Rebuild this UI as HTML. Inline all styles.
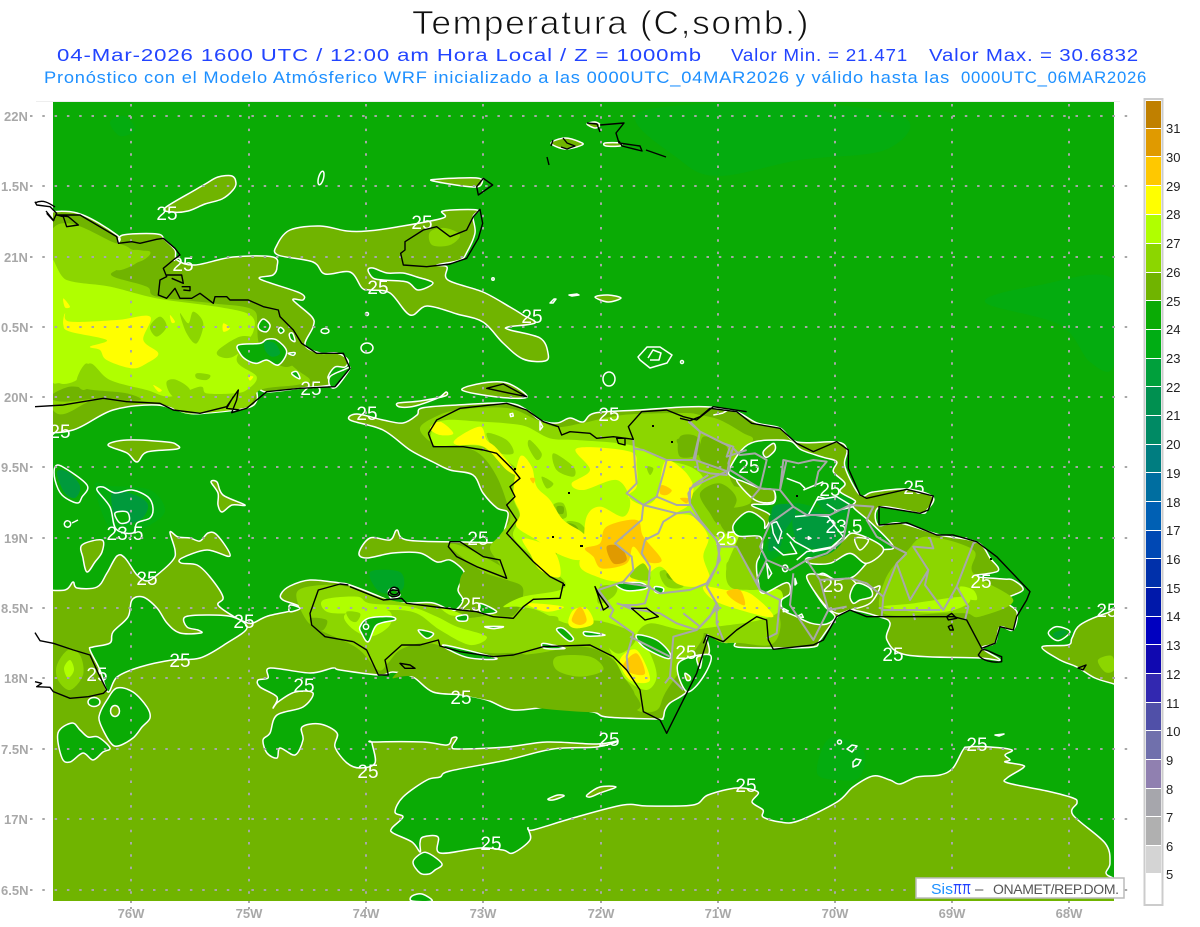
<!DOCTYPE html>
<html><head><meta charset="utf-8"><title>Temperatura</title>
<style>
html,body{margin:0;padding:0;background:#fff}
svg{display:block;font-family:"Liberation Sans",sans-serif}
svg *{vector-effect:non-scaling-stroke}
.o{fill:#70b400}.l6{fill:#8cd600}.l7{fill:#b0ff00}.l8{fill:#ffff00}.l9{fill:#ffc800}.l0{fill:#e09a00}
.g{fill:#0aab05;stroke:#fff;stroke-width:1.5;stroke-linejoin:round}
.ow{fill:#70b400;stroke:#fff;stroke-width:1.5;stroke-linejoin:round}
.w{fill:none;stroke:#fff;stroke-width:1.5;stroke-linejoin:round}
.k{fill:none;stroke:#000;stroke-width:1.4;stroke-linejoin:round}
.b{fill:none;stroke:#a8a8a8;stroke-width:2;stroke-linejoin:round}
.lab text{fill:#fff;font-size:19px;text-anchor:middle}
.ax text{fill:#a8a8a8;font-size:13px;font-weight:bold}
.cb text{fill:#222;font-size:13px}
</style></head><body>
<svg id="s" width="1200" height="927" viewBox="0 0 1200 927" xmlns="http://www.w3.org/2000/svg">
<defs><clipPath id="m"><rect x="53" y="102" width="1061" height="799"/></clipPath></defs>
<rect width="1200" height="927" fill="#fff"/>
<text x="412" y="34" font-size="33" fill="#111" stroke="#fff" stroke-width=".8" letter-spacing="1.5" textLength="398" lengthAdjust="spacingAndGlyphs">Temperatura (C,somb.)</text>
<g font-size="17.5" fill="#2244ff" letter-spacing=".7">
<text x="57" y="61" textLength="645" lengthAdjust="spacingAndGlyphs">04-Mar-2026 1600 UTC / 12:00 am Hora Local / Z = 1000mb</text>
<text x="731" y="61" textLength="177" lengthAdjust="spacingAndGlyphs">Valor Min. = 21.471</text>
<text x="929" y="61" textLength="210" lengthAdjust="spacingAndGlyphs">Valor Max. = 30.6832</text>
</g>
<g font-size="16.5" fill="#1e90ff" letter-spacing=".7">
<text x="44" y="83" textLength="906" lengthAdjust="spacingAndGlyphs">Pronóstico con el Modelo Atmósferico WRF inicializado a las 0000UTC_04MAR2026 y válido hasta las</text>
<text x="961" y="83" textLength="186" lengthAdjust="spacingAndGlyphs">0000UTC_06MAR2026</text>
</g>
<line x1="36" y1="101.5" x2="1120" y2="101.5" stroke="#eee"/>
<g clip-path="url(#m)">
<rect x="53" y="102" width="1061" height="799" fill="#0aab05"/>
<!-- subtle sea patches -->
<g fill="#04ac0f">
<polygon points="640,112 800,103 905,118 885,150 800,160 720,176 680,160"/>
<polygon points="985,302 1040,285 1114,280 1114,365 1090,362 1060,325"/>
<polygon points="830,738 863,750 860,777 840,780 817,773"/>
<polygon points="110,122 125,116 135,130 120,136"/>
</g>
<polygon fill="#00a525" points="370,572 400,572 402,590 380,592"/>
<!-- main olive -->
<polygon class="ow" points="40,590 65,590 73,582 77,588 97,587 107,573 117,556 125,558 137,575 147,581 157,575 173,560 175,550 170,532 178,537 190,538 200,541 208,533 217,535 230,556 207,550 182,558 181,563 197,565 210,577 223,597 218,605 233,616 245,622 253,623 268,616 300,608 283,600 281,594 290,586 310,580 340,583 350,585 383,598 390,602 410,603 433,603 450,610 457,609 463,600 458,590 463,577 463,570 450,560 437,562 420,553 393,553 367,558 359,553 370,538 390,540 397,530 407,540 463,542 507,542 504,533 508,513 497,508 483,493 473,475 450,470 433,462 410,450 383,430 350,420 357,414 383,420 403,423 417,415 422,408 457,405 507,403 527,410 540,420 557,423 570,418 583,422 595,413 640,410 683,407 710,407 737,412 757,423 780,428 797,442 837,442 847,450 845,467 860,495 873,492 907,489 933,497 927,510 920,513 880,507 878,525 900,523 940,535 977,542 990,558 998,571 972,576 1003,579 1013,580 1023,590 1005,600 1017,612 1013,630 1000,627 995,643 982,648 1000,660 980,658 907,655 887,640 890,623 880,617 850,610 837,617 820,640 813,647 773,648 737,647 735,642 723,642 707,635 708,655 680,662 683,673 690,687 683,695 670,703 665,710 663,718 657,719 607,717 593,712 553,707 513,710 487,700 463,695 433,692 413,677 393,672 380,675 340,670 333,668 310,673 270,668 268,678 258,680 260,687 277,697 273,708 278,702 295,692 313,693 303,707 277,715 270,733 263,740 267,753 277,758 280,748 295,755 303,740 302,727 320,724 337,733 335,747 347,763 360,768 375,763 372,743 373,742 423,742 447,745 452,738 457,738 452,747 460,749 507,747 547,742 597,744 618,741 597,747 553,749 507,760 450,771 440,777 427,780 403,797 395,812 403,817 392,828 393,833 412,842 420,852 420,843 423,837 438,837 440,853 480,848 503,850 513,853 530,840 528,828 533,830 573,818 623,805 647,806 693,805 708,795 737,788 758,792 752,802 763,810 763,817 780,822 798,821 837,802 853,787 873,776 890,780 900,784 917,777 940,775 953,768 963,750 968,747 990,747 1012,750 1005,755 1010,760 1005,762 1022,765 1023,768 1007,778 1008,783 1047,791 1073,798 1077,803 1073,815 1105,843 1110,863 1106,873 1113,878 1130,885 1130,920 40,920 30,900 30,620 30,592"/>
<!-- Cuba olive -->
<polygon class="ow" points="35,213 77,213 117,235 118,243 123,235 157,234 165,240 175,250 177,260 195,265 233,257 273,257 277,267 273,275 260,279 300,293 303,300 293,300 312,317 313,327 305,345 320,353 337,353 348,360 345,367 335,367 328,377 330,385 302,388 267,392 257,388 257,400 247,408 207,413 187,413 157,405 113,410 73,430 35,432 25,425 25,225 27,214"/>
<!-- north tongue -->
<polygon class="ow" points="277,245 290,230 320,226 347,231 367,231 397,227 443,218 443,211 477,210 473,217 475,233 467,252 460,260 437,265 447,267 448,280 483,292 510,307 523,315 535,323 508,327 510,330 540,338 548,353 545,361 523,359 503,343 483,322 457,314 427,306 410,315 390,293 370,290 362,288 350,272 325,274 313,262 278,255"/>
<polygon class="g" points="368,270 373,268 387,273 403,273 417,277 433,283 418,290 407,282 383,280 373,278"/>
<!-- small olive islets -->
<polygon class="ow" points="165,208 195,190 207,183 218,177 232,176 236,183 233,190 222,199 205,204 188,211 172,212"/>
<polygon class="ow" points="433,181 440,179 477,178 482,183 473,187"/>
<polygon class="ow" points="551,143 565,138 580,142 582,145 565,149"/>
<polygon class="ow" points="587,124 595,122 600,125 595,128"/>
<polygon class="ow" points="605,143 620,143 620,146 606,146"/>
<polygon class="ow" points="108,445 127,440 167,442 177,445 177,449 147,452 137,462 127,453"/>
<polygon class="ow" points="211,482 217,482 223,495 245,505 232,505 222,512 218,505 218,493"/>
<polygon class="ow" points="82,545 102,540 102,552 95,562 87,572 83,558"/>
<polygon class="ow" points="1130,610 1107,613 1080,625 1072,638 1068,645 1042,647 1060,660 1077,667 1095,678 1114,684 1130,690"/>
<polygon class="ow" points="462,390 483,383 507,383 527,397 497,397"/>
<polygon class="ow" points="398,403 420,401 445,396 446,392 438,398 415,406 400,407"/>
<polygon class="ow" points="595,297 608,295 621,298 608,302"/>
<g class="w">
<ellipse cx="321" cy="178" rx="2.5" ry="7" transform="rotate(15 321 178)"/>
<circle cx="367" cy="314" r="1.5"/>
<ellipse cx="325" cy="331" rx="4" ry="2.5"/>
<ellipse cx="367" cy="348" rx="6" ry="5"/>
<ellipse cx="609" cy="379" rx="6" ry="7"/>
<circle cx="493" cy="279" r="1.2"/>
<path d="M550,303l4-4 2 0-3 4Z M569,295l8-1 2 1-7 1Z"/>
<path d="M638,357 647,347 660,347 672,355 667,363 650,368 640,360Z"/>
<path d="M648,358 653,350 661,353 659,360 650,360"/>
<circle cx="682" cy="362" r="1.5"/>
</g>
<!-- Cuba shading (z6 coords) -->
<g transform="scale(.33333) translate(0,600)">
<polygon class="l6" points="150,100 350,130 400,150 450,155 430,180 350,210 340,230 440,260 470,290 640,310 760,330 780,400 880,500 930,540 890,555 780,570 740,620 600,640 540,635 480,610 300,595 150,610"/>
<polygon class="o" points="150,590 210,560 280,570 380,580 420,600 300,595 190,605"/>
<polygon class="o" points="780,345 830,345 900,440 950,470 970,500 920,480 850,500 780,440"/>
<polygon class="l7" points="150,190 200,240 330,260 470,295 650,320 750,345 760,395 710,480 770,530 740,570 700,580 620,580 600,560 510,590 440,570 330,540 270,490 230,540 180,550 150,510"/>
<g class="l6"><polygon points="450,380 480,350 500,380 470,410"/><polygon points="540,340 565,370 580,335 610,370 590,430 560,400"/><polygon points="500,545 530,540 570,570 540,600 510,580"/><polygon points="590,520 630,525 620,540 590,535"/><polygon points="790,510 815,500 830,530 810,550"/><polygon points="230,540 260,490 290,540 250,570"/><polygon points="655,450 720,410 760,420 700,470 660,470"/><polygon points="350,170 400,150 440,160 400,195 350,210"/></g>
<g class="l8"><polygon points="190,295 210,320 195,322"/><polygon points="195,340 210,365 350,360 450,350 430,420 475,460 440,490 395,505 320,480 300,450 270,440 320,420 210,395 190,375"/><polygon points="670,370 690,385 670,395"/><polygon points="510,345 525,365 515,368"/><polygon points="460,555 485,570 475,575"/><polygon points="745,530 760,530 750,542"/></g>
<g class="g"><polygon points="715,435 780,430 800,418 830,420 860,455 835,495 800,480 770,490 740,480 720,460"/><polygon points="775,375 790,357 810,375 800,395 780,390"/><polygon points="835,390 842,382 852,392 842,400"/><polygon points="868,402 878,400 885,424 872,418"/><polygon points="865,460 885,458 880,466"/><polygon points="875,520 890,515 900,535 890,533"/><polygon points="990,530 1030,510 1050,505 1010,560 990,558"/></g>
<polygon fill="#00a530" points="795,425 825,430 840,460 815,470 795,450"/>
</g>
<!-- Hispaniola -->
<polygon class="l6" points="297,592 323,585 353,588 390,600 447,610 463,618 495,613 505,600 512,590 500,565 490,548 500,535 510,520 507,503 497,477 483,457 467,448 443,447 428,440 420,428 433,418 457,410 507,408 537,420 557,427 583,423 623,415 683,413 700,415 720,420 743,433 753,440 737,457 730,477 737,493 730,513 720,523 737,547 757,580 777,610 780,630 770,645 740,643 720,642 705,633 700,643 667,690 657,710 637,710 633,690 610,667 567,660 550,653 537,657 517,653 490,653 450,647 423,643 400,650 388,663 378,670 357,648 320,630 305,618"/>
<g transform="translate(350,390) scale(.33333)">
<polygon class="o" points="980,150 1010,145 1040,165 1000,178"/>
<polygon class="o" points="1050,170 1130,180 1130,240 1060,220"/>
<polygon class="l6" points="300,470 340,470 470,540 470,570 390,540"/>
<polygon class="o" points="345,545 470,570 520,600 480,680 345,630"/>
<polygon class="o" points="130,860 270,770 430,800 560,790 700,770 790,810 830,880 860,960 620,960 340,915 190,860"/>
<polygon class="l6" points="620,800 720,800 760,840 690,860 620,840"/>
<polygon class="l7" points="250,110 290,90 390,95 470,100 530,110 600,145 680,150 840,165 930,205 1020,230 1060,270 1020,330 1060,400 1100,440 1170,420 1130,530 1140,590 1200,600 1290,600 1290,660 1230,690 1100,710 1000,720 900,700 860,740 900,790 920,860 890,900 830,870 800,820 730,700 650,700 560,660 500,650 460,650 520,620 630,600 640,570 550,500 490,440 510,380 490,320 510,250 450,200 400,170 330,165 250,165"/>
<g class="l6"><polygon points="410,130 470,150 490,190 440,185"/><polygon points="540,150 575,190 560,210 535,170"/><polygon points="610,190 670,230 670,260 620,240"/><polygon points="610,345 640,340 650,380 620,385"/><polygon points="650,395 690,400 710,430 665,425"/><polygon points="580,460 620,490 600,500 565,470"/><polygon points="930,545 980,545 1000,590 950,590"/><polygon points="1000,400 1040,405 1030,445 1005,440"/><polygon points="1060,370 1100,335 1110,350 1070,395"/><polygon points="575,260 610,280 590,295"/><polygon points="1130,520 1165,510 1170,560 1140,570"/><polygon points="1120,290 1190,300 1200,340 1130,350"/><polygon points="750,590 800,590 790,620 745,640"/><polygon points="570,680 620,680 620,700 580,705"/><polygon points="720,700 780,700 860,740 800,790"/></g>
<g class="o"><polygon points="655,400 675,405 685,420 665,420"/><polygon points="620,350 640,350 640,370 625,370"/><polygon points="950,550 975,555 975,570 955,565"/></g>
<g class="l8"><polygon points="240,115 270,95 310,130 270,135"/><polygon points="320,145 390,110 410,150 440,175 500,250 470,240 400,170 320,165"/><polygon points="510,200 545,230 560,290 600,330 640,390 700,430 720,470 690,510 620,490 560,450 500,410 510,370 490,310"/><polygon points="520,445 610,480 630,560 570,540 540,490"/><polygon points="680,175 840,185 860,230 860,290 835,320 880,345 920,320 945,215 1000,240 1030,290 1015,345 980,370 1030,380 1075,440 1060,500 1080,570 1040,590 980,580 930,530 870,570 800,575 740,560 690,530 700,470 710,380 750,350 820,380 840,330 800,270 700,300 665,280 720,240"/><polygon points="1060,590 1130,600 1200,610 1270,680 1170,660 1090,630"/><polygon points="530,640 640,650 590,665"/><polygon points="670,660 710,655 730,700 680,715 655,700"/><polygon points="810,810 860,780 900,870 840,870"/><polygon points="745,365 790,410 750,420"/></g>
<g class="l6"><polygon points="890,230 910,235 900,255"/><polygon points="840,560 880,520 900,570"/></g>
<g class="l9"><polygon points="705,475 750,460 770,410 860,390 880,440 935,510 890,515 850,470 830,520 755,535 730,500"/><polygon points="935,285 965,300 950,315 930,310"/><polygon points="990,325 1015,325 1010,340"/><polygon points="1130,605 1170,600 1185,645 1150,630"/><polygon points="665,690 690,650 710,690 690,705"/><polygon points="820,825 860,790 885,850 845,850"/><polygon points="540,265 555,265 550,280"/></g>
<polygon class="l0" points="770,470 810,470 830,510 790,520"/>
<g class="g"><polygon points="860,735 920,750 960,790 950,805 880,770"/><polygon points="800,582 870,578 890,595 830,602"/><polygon points="915,590 940,595 935,610 915,605"/><polygon points="985,820 1080,795 1060,860 1010,905"/></g>
<polygon fill="#8cd600" stroke="#fff" stroke-width="1.5" points="1040,805 1055,800 1050,835"/><polygon fill="#8cd600" stroke="#fff" stroke-width="1.5" points="1005,850 1020,860 1020,870 1010,870"/>
<g class="w"><path d="M480,72l8-2 2 8-8 2ZM525,85l4 3M570,95l8 15-8 10ZM1090,75l30-6 M1120,55l15 5-15 8"/></g>
</g>
<!-- peninsula (z12 coords) -->
<g transform="translate(290,570) scale(.33333)">
<polygon class="l7" points="100,90 200,80 240,100 360,110 440,140 500,170 590,200 540,225 450,180 380,130 300,120 180,130 110,125"/>
<polygon class="l7" points="170,130 290,120 300,165 240,200 180,170"/>
<polygon class="l7" points="450,110 520,135 480,135"/>
<polygon class="l6" points="170,125 210,130 200,155 180,150"/>
<polygon class="o" points="60,145 110,150 100,180 75,175"/>
<g class="g"><polygon points="210,170 235,145 300,140 315,150 260,165 235,215 215,190"/><polygon points="385,180 430,190 410,205"/><polygon points="500,140 530,135 530,152 505,152"/><polygon points="570,100 620,125 575,130"/><polygon points="800,180 820,175 850,205 835,212"/><polygon points="885,185 945,195 890,198"/><polygon points="585,170 640,170 610,176"/><polygon points="760,220 825,235 765,235"/><polygon points="460,225 620,265 530,262"/><polygon points="295,65 310,55 330,75 305,85"/><polygon points="0,105 30,115 0,125"/></g>
<circle cx="228" cy="170" r="8" class="w"/>
</g>
<!-- DR shading & hole (z5 coords) -->
<g transform="translate(680,400) scale(.33333)">
<polygon class="o" points="0,110 50,110 60,160 0,170"/>
<polygon class="o" points="70,110 140,140 130,200 70,170"/>
<polygon class="o" points="60,280 120,250 170,300 120,370 90,340"/>
<polygon class="l6" points="610,640 615,540 680,455 740,410 880,450 880,520 1000,600 900,650 860,640 780,640"/>
<polygon class="l7" points="610,620 700,610 850,590 865,610 800,635 700,635"/>
<polygon class="l7" points="840,560 880,570 890,600 850,590"/>
<polygon class="g" points="150,205 185,150 225,125 290,120 335,125 365,150 430,172 470,185 460,215 495,250 480,275 525,302 520,322 575,370 640,440 600,452 560,490 520,530 470,540 430,520 405,530 380,530 410,585 435,620 465,650 440,672 395,670 350,650 310,630 305,600 330,580 320,548 250,580 235,545 230,490 245,455 240,410 175,408 160,375 205,335 250,360 255,385 270,345 215,315 280,310 280,270 235,265 155,230"/>
<g fill="#70b400" stroke="#fff" stroke-width="1.5"><polygon points="250,155 280,130 285,150 260,172"/><polygon points="170,240 240,265 280,270 280,305 225,300"/><polygon points="380,475 440,460 490,420 525,400 610,445 560,490 510,460 450,490 390,490"/><polygon points="525,415 565,420 540,450"/><polygon points="380,530 430,525 470,540 510,535 540,560 575,565 600,560 570,610 510,630 470,640 430,610"/></g>
<polygon class="g" points="510,585 530,550 570,565 575,590 540,600 520,610"/>
<polygon class="g" points="1105,700 1130,680 1170,695 1135,722"/>
<polygon fill="#00a030" points="1120,700 1150,690 1160,700 1130,715"/>
<g fill="#00a81c"><polygon points="270,345 340,310 420,320 490,290 510,320 490,420 440,465 380,470 340,450 270,480 240,470 270,400"/></g>
<polygon fill="#009a3c" points="345,345 445,345 470,400 445,440 400,445 350,420"/>
<polygon fill="#009a3c" points="280,320 340,315 345,345 310,400 300,440 265,450 275,380"/>
<polygon fill="#00a030" points="410,300 480,290 500,330 450,340"/>
<g class="w"><path d="M345,350l55,-5 45,5 25,35 20,25-40,35-50,10-55,-30-25,-25M275,370l15-5 15,30-10,35-15-30ZM330,425l20 35-40,5-30-25M350,480l30-25 80-15 30-20M315,495a8 10 0 1 0 1 0ZM350,390l15-5M385,410l8 5-8 3ZM345,535l5 15-5 5ZM310,625l15 8-15 2ZM350,650l15-8 5 10ZM260,490l15 30-10 15ZM385,345l30-55 20 5M320,235l40 15 15 15M430,245l-60,25M410,300l60-10 50,30-50,12-30-20"/></g>
</g>
<!-- dark west blobs -->
<g class="g"><polygon points="55,467 63,467 87,485 82,497 77,503 62,495 55,480"/></g>
<polygon fill="#009a3c" points="57,472 68,472 80,486 75,498 64,492"/>
<polygon fill="#04ac0f" points="95,485 110,486 150,490 165,510 150,525 120,535 105,520"/>
<polygon fill="#009a3c" points="112,492 135,495 148,505 140,520 118,522"/>
<polygon class="w" points="97,490 103,487 115,493 132,490 148,497 153,508 150,518 137,523 133,533 116,529 110,507"/>
<polygon class="g" points="115,513 127,512 129,521 120,523"/>
<path class="w" d="M65,526a3 3 0 1 0 5-4a3 3 0 1 0-5 4ZM72,523l4-2 2-1"/>
<!-- south holes -->
<g class="g">
<polygon points="90,650 93,647 110,643 113,632 128,617 132,600 143,597 157,608 167,623 180,633 201,633 198,630 187,627 185,617 207,615 233,617 247,628 227,643 200,658 172,660 140,667 117,677 108,692 100,670"/>
<ellipse cx="94" cy="702" rx="6" ry="4.5"/>
<polygon points="100,713 107,700 117,688 133,692 147,707 150,718 142,727 133,738 118,746 110,742 100,723"/>
<polygon points="58,733 72,723 80,730 88,737 98,737 110,748 103,752 93,760 83,753 70,762 62,758"/>
<polygon points="413,862 422,853 430,854 442,864 435,870 429,874 420,873"/>
<polygon points="412,901 412,896 422,894 432,901"/>
</g>
<ellipse class="ow" cx="115" cy="711" rx="4.5" ry="5.5"/>
<polygon class="ow" points="548,799 558,795 564,796 553,800"/>
<polygon class="ow" points="587,795 600,787 616,787 600,793 590,797"/>
<polygon fill="#8cd600" points="57,665 68,650 80,655 83,675 70,690 58,680"/>
<polygon fill="#b0ff00" points="64,668 70,660 74,670 68,678"/>
<polygon fill="#8cd600" points="430,232 445,228 460,235 450,245 432,245"/>
<polygon fill="#8cd600" points="1098,660 1112,656 1114,670 1105,672"/>
<!-- z10 rings -->
<g class="w"><circle cx="839.5" cy="742" r="2"/><path d="M847,749l5-4 5,1-5,6ZM853,762l3-3 5,1-3 5-5 2Z"/><path d="M995,735l9-1-5,2Z" fill="#fff"/></g>
<!-- grid -->
<g fill="none" stroke="#a8a8a8" stroke-width="2" stroke-dasharray="2.5 9.8">
<path d="M131,104V901M249,104V901M366,104V901M483,104V901M601,104V901M718,104V901M835,104V901M952,104V901M1069,104V901"/>
</g>
<!-- labels -->
<g class="lab">
<text x="167" y="220">25</text><text x="183" y="271">25</text><text x="378" y="294">25</text><text x="422" y="229">25</text><text x="532" y="323">25</text><text x="311" y="395">25</text><text x="60" y="438">25</text><text x="367" y="420">25</text><text x="609" y="421">25</text><text x="749" y="473">25</text><text x="830" y="496">25</text><text x="914" y="494">25</text><text x="844" y="533" font-size="18">23.5</text><text x="726" y="545">25</text><text x="125" y="540" font-size="18">23.5</text><text x="147" y="585">25</text><text x="97" y="681">25</text><text x="244" y="628">25</text><text x="180" y="667">25</text><text x="304" y="692">25</text><text x="368" y="778">25</text><text x="461" y="704">25</text><text x="471" y="611">25</text><text x="478" y="545">25</text><text x="686" y="659">25</text><text x="833" y="592">25</text><text x="981" y="588">25</text><text x="893" y="661">25</text><text x="1107" y="617">25</text><text x="609" y="746">25</text><text x="977" y="751">25</text><text x="746" y="792">25</text><text x="491" y="850">25</text>
</g>
</g>
<!-- horizontal grid extends outside map -->
<g fill="none" stroke="#a8a8a8" stroke-width="2" stroke-dasharray="2.5 9.8">
<path d="M30,116H1135M30,186H1135M30,257H1135M30,327H1135M30,397H1135M30,467H1135M30,538H1135M30,608H1135M30,678H1135M30,749H1135M30,819H1135M30,890H1135"/>
<path d="M131,901V910M249,901V910M366,901V910M483,901V910M601,901V910M718,901V910M835,901V910M952,901V910M1069,901V910" stroke-dasharray="2 4"/>
</g>
<!-- borders -->
<g transform="translate(350,390) scale(.33333)"><path class="b" d="M850,148 855,230 860,280 830,310 880,345 875,390 795,460 845,500 850,540 820,575 760,595 745,600 790,660 780,680 850,730 830,800 835,845M850,175 880,180 950,210 1030,210 1050,125 1015,90M1050,125 1140,170 1130,200 1190,180M1040,210 1045,240 1080,250 1130,255 1145,180M950,210 940,250 920,320 880,345M920,320 980,345 1020,345 1015,310 1030,285 1075,255M980,370 1020,365 1060,405 1100,450 1110,510 1070,580 1020,600 930,610 895,590 900,530 875,490 885,450 925,430 940,395 980,370M820,578 900,590 885,640 860,645 815,645 850,660M1070,590 1100,640 1080,680 1040,720 970,740 960,860 1000,900M800,640 870,660 930,670 980,700 1040,720M840,740 960,800M1100,650 1100,700 1120,750M960,860 945,880M880,345 980,370"/></g>
<g transform="translate(680,400) scale(.33333)"><path class="b" d="M25,65 60,95 130,130 160,140 145,190 150,210 115,225 80,240 30,265 30,310 60,360 105,415 120,440 110,500 80,560 115,620 60,680 10,640M60,95 45,180 145,215M160,145 180,165 225,160 260,180 240,265M150,210 240,265 300,270 310,180 355,190 400,180 440,185 415,215 405,260M300,270 340,320 380,345 450,345 510,315 580,320 560,360 590,410 640,440 680,460M340,320 270,370 240,440 260,480 230,540 240,570 170,440 115,440M260,480 330,510 380,480 440,460 490,420 510,315M380,480 420,540 445,630 400,720 330,615 340,520M680,460 650,490 610,590 605,650M650,490 690,600 745,510 700,440 760,445 750,415M610,590 560,550 510,535 420,540M745,510 735,555 790,630 830,560 880,430 890,425M830,560 865,620 855,660M605,630 780,630M500,620 445,630M240,570 300,600 290,700 260,715M215,295 240,265M300,270 320,180M700,640 705,660"/></g>
<!-- coasts -->
<g transform="translate(350,390) scale(.33333)">
<path class="k" d="M235,130 260,90 330,55 470,40 530,60 580,95 625,110 635,135 660,125 720,130 740,145 790,140 850,148 835,110 875,65 950,60 1000,80 1040,90 1090,50 1190,65"/>
<path class="k" d="M235,130 250,170 340,170 400,180 440,190 490,240 510,265 480,290 495,320 470,345 500,390 470,430 550,515 600,560 640,580 630,625 550,628 520,650 490,685 430,680 380,665 330,660 170,640 155,625 100,630 0,590"/>
<path class="k" d="M1075,740 1040,850 1000,930 950,1030 930,990 880,965 870,900 830,840 790,800 720,765 580,770 490,795 430,800 330,785 270,768 265,750 210,765 155,765 105,810 115,855 85,855 50,780 10,755"/>
<path class="k" d="M300,455 330,455 400,500 450,510 470,565 380,530 320,500 295,470Z"/>
<path class="k" d="M735,590 760,660 775,650 745,610ZM150,820 180,825 195,835 165,835Z"/>
<path class="k" d="M120,600a12 10 0 1 0 26 6a12 10 0 1 0-26-6ZM800,145l25 0 0 20-20-5ZM845,655 890,655 925,680 885,690Z"/>
</g>
<g transform="translate(290,570) scale(.33333)">
<path class="k" d="M190,215 105,200 65,165 60,130 85,60 150,42 175,45"/>
<path class="k" d="M295,70a17 10 0 1 0 34 0a17 10 0 1 0-34 0Z"/>
</g>
<g transform="translate(680,400) scale(.33333)">
<path class="k" stroke="#222" d="M0,55 30,62 60,50 90,25 170,35 215,70 300,85 350,130 400,155 470,125 505,150 505,205 540,285 560,295 680,268 760,288 745,330 720,340 597,320 597,375 660,370 680,368 770,405 820,405 890,425 950,470 1050,575 1040,600 1010,650 1000,690 960,680 945,730 905,745 860,660 820,650 720,650 600,650 560,650 510,630 470,650 430,720 400,735 280,748 265,720 260,660 230,650 170,690 130,725 80,705 70,730"/>
<path class="k" d="M905,750c15,-5 40,15 60,20v15c-30,5-60,-5-70,-20ZM805,680l10,-5 5,15-10,0ZM800,650l15-10 15,15-25,5Z"/>
</g>
<g transform="scale(.33333) translate(0,600)">
<path class="k" d="M105,5 110,15 150,20 170,40 160,62 140,40M170,45 190,50 200,80 235,75 205,50 170,45 240,45 350,110 355,130 395,125 420,130 470,118 490,115 525,145 540,165 520,180 490,205 500,230 480,240 475,285 500,295 525,265 540,295 575,295 600,280 640,310 645,290 680,290 690,300 745,300 790,320 835,330 840,350 880,390 905,430 950,460 1030,460 1050,505 1005,560 900,565 800,575 770,600 740,625 695,638 710,600 715,570 680,620 600,640 520,630 480,610 380,605 310,595 190,615 105,620M500,225 545,225 550,250 515,235M545,260 570,260 570,272 550,270M700,590 680,625 718,630"/>
</g>
<g transform="translate(270,170) scale(.33333)">
<path class="k" d="M405,215 460,180 500,170 540,200 590,180 610,140 630,118 638,160 625,205 590,265 540,282 470,290 400,285 392,250 405,240ZM620,50 640,25 668,45 625,75ZM650,655 700,642 770,680 720,670Z"/>
</g>
<g transform="scale(.33333) translate(0,1440)"><path class="k" d="M105,458 120,482 160,490 220,510 270,525 295,580 320,630 310,640 265,650 210,655 160,635 150,622 110,620 125,610 105,605"/></g>
<path class="k" d="M35,203c8-4 14 0 20 4M46,211l8 10M563,138l4 5 8 3-8 3-6-2M547,157l2 8M587,123l10 1 3 8M600,125l24-2-8 10 3 10 21 3 2 5-20-5-3-5M646,150l20 7M553,140l-2 6M1086,665l-8 3 5 2Z"/>
<g fill="#000"><rect x="652" y="425" width="2" height="2"/><rect x="671" y="441" width="2" height="2"/><rect x="514" y="468" width="2" height="2"/><rect x="568" y="492" width="2" height="2"/><rect x="552" y="536" width="2" height="2"/><rect x="580" y="545" width="3" height="2"/><rect x="563" y="584" width="2" height="2"/><rect x="796" y="495" width="2" height="2"/><rect x="990" y="558" width="2" height="2"/></g>
<!-- axis labels -->
<g class="ax">
<text x="4" y="121">22N</text><text x="1" y="191">1.5N</text><text x="4" y="262">21N</text><text x="1" y="332">0.5N</text><text x="4" y="402">20N</text><text x="1" y="472">9.5N</text><text x="4" y="543">19N</text><text x="1" y="613">8.5N</text><text x="4" y="683">18N</text><text x="1" y="754">7.5N</text><text x="4" y="824">17N</text><text x="1" y="895">6.5N</text>
<g text-anchor="middle"><text x="131" y="918">76W</text><text x="249" y="918">75W</text><text x="366" y="918">74W</text><text x="483" y="918">73W</text><text x="601" y="918">72W</text><text x="718" y="918">71W</text><text x="835" y="918">70W</text><text x="952" y="918">69W</text><text x="1069" y="918">68W</text></g>
</g>
<!-- credit -->
<rect x="916" y="878" width="208" height="20" fill="#fff" stroke="#bbb" stroke-width="1.5"/>
<text x="931" y="894" font-size="15" fill="#1e90ff" textLength="22" lengthAdjust="spacingAndGlyphs">Sis</text>
<text x="953" y="894" font-size="18" fill="#2040ff" textLength="18" lengthAdjust="spacingAndGlyphs">ππ</text>
<text x="975" y="894" font-size="15" fill="#555">–</text>
<text x="993" y="894" font-size="14" fill="#555" textLength="126" lengthAdjust="spacing">ONAMET/REP.DOM.</text>
<!-- colorbar -->
<rect x="1144.5" y="99" width="18" height="806" fill="#fff" stroke="#ccc" stroke-width="2"/>
<g>
<rect x="1146" y="101" width="15" height="27" fill="#c08000"/><rect x="1146" y="129" width="15" height="27" fill="#e09a00"/><rect x="1146" y="157" width="15" height="28" fill="#ffc800"/><rect x="1146" y="186" width="15" height="28" fill="#ffff00"/><rect x="1146" y="215" width="15" height="28" fill="#b0ff00"/><rect x="1146" y="244" width="15" height="28" fill="#8cd600"/><rect x="1146" y="273" width="15" height="27" fill="#70b400"/><rect x="1146" y="301" width="15" height="28" fill="#0aab05"/><rect x="1146" y="330" width="15" height="28" fill="#00ad14"/><rect x="1146" y="359" width="15" height="27" fill="#00a03c"/><rect x="1146" y="387" width="15" height="28" fill="#009050"/><rect x="1146" y="416" width="15" height="28" fill="#008a64"/><rect x="1146" y="445" width="15" height="27" fill="#007d80"/><rect x="1146" y="473" width="15" height="28" fill="#006ea0"/><rect x="1146" y="502" width="15" height="28" fill="#0060b4"/><rect x="1146" y="531" width="15" height="27" fill="#0048b4"/><rect x="1146" y="559" width="15" height="28" fill="#0030aa"/><rect x="1146" y="588" width="15" height="28" fill="#0018aa"/><rect x="1146" y="617" width="15" height="27" fill="#0000c0"/><rect x="1146" y="645" width="15" height="28" fill="#1008b0"/><rect x="1146" y="674" width="15" height="28" fill="#3228b0"/><rect x="1146" y="703" width="15" height="27" fill="#5050a8"/><rect x="1146" y="731" width="15" height="28" fill="#7070ac"/><rect x="1146" y="760" width="15" height="28" fill="#9080b0"/><rect x="1146" y="789" width="15" height="27" fill="#a6a6ac"/><rect x="1146" y="817" width="15" height="28" fill="#b0b0b0"/><rect x="1146" y="846" width="15" height="27" fill="#d4d4d4"/>
</g>
<g class="cb">
<text x="1166" y="133">31</text><text x="1166" y="162">30</text><text x="1166" y="191">29</text><text x="1166" y="219">28</text><text x="1166" y="248">27</text><text x="1166" y="277">26</text><text x="1166" y="306">25</text><text x="1166" y="334">24</text><text x="1166" y="363">23</text><text x="1166" y="392">22</text><text x="1166" y="420">21</text><text x="1166" y="449">20</text><text x="1166" y="478">19</text><text x="1166" y="507">18</text><text x="1166" y="535">17</text><text x="1166" y="564">16</text><text x="1166" y="593">15</text><text x="1166" y="621">14</text><text x="1166" y="650">13</text><text x="1166" y="679">12</text><text x="1166" y="708">11</text><text x="1166" y="736">10</text><text x="1166" y="765">9</text><text x="1166" y="794">8</text><text x="1166" y="822">7</text><text x="1166" y="851">6</text><text x="1166" y="879">5</text>
</g>
</svg>
<script>
/* smooth the hand-traced contour polygons with closed Catmull-Rom curves */
(function(){
var ns="http://www.w3.org/2000/svg",ps=document.querySelectorAll("#s polygon");
for(var i=0;i<ps.length;i++){
 var el=ps[i],n=el.getAttribute("points").trim().split(/\s+/).map(function(a){var q=a.split(",");return[+q[0],+q[1]]});
 var L=n.length,d="M"+n[0][0]+","+n[0][1];
 for(var j=0;j<L;j++){
  var p0=n[(j-1+L)%L],p1=n[j],p2=n[(j+1)%L],p3=n[(j+2)%L];
  d+="C"+(p1[0]+(p2[0]-p0[0])/6).toFixed(1)+","+(p1[1]+(p2[1]-p0[1])/6).toFixed(1)+" "+(p2[0]-(p3[0]-p1[0])/6).toFixed(1)+","+(p2[1]-(p3[1]-p1[1])/6).toFixed(1)+" "+p2[0]+","+p2[1];
 }
 var r=document.createElementNS(ns,"path");
 for(var k=0;k<el.attributes.length;k++){var at=el.attributes[k];if(at.name!=="points")r.setAttribute(at.name,at.value)}
 r.setAttribute("d",d+"Z");
 el.parentNode.replaceChild(r,el);
}
})();
</script>
</body></html>
